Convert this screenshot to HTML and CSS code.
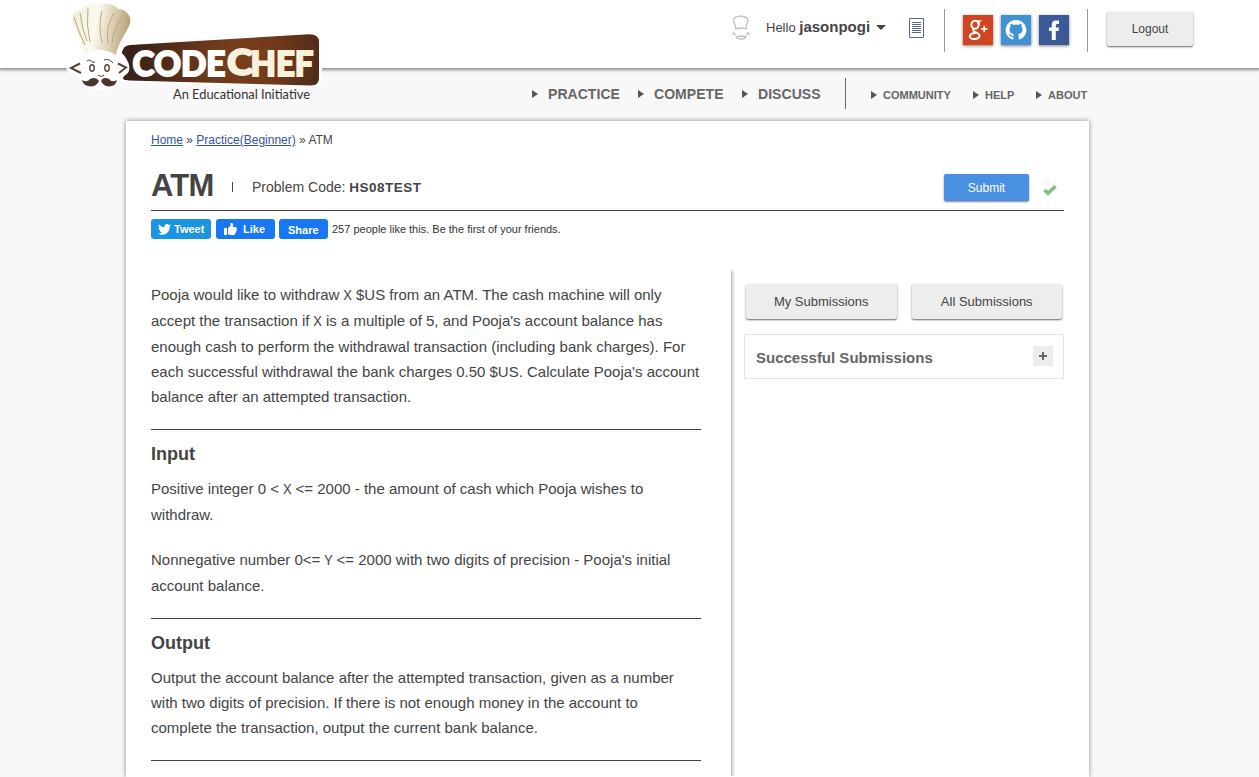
FILE: index.html
```html
<!DOCTYPE html>
<html lang="en">
<head>
<meta charset="utf-8">
<title>ATM | CodeChef</title>
<link rel="stylesheet" href="styles.css">
</head>
<body>
<header class="topbar">
  <a class="logo">
    <svg width="270" height="110" viewBox="60 0 270 110">
      <defs>
        <radialGradient id="wood" gradientUnits="userSpaceOnUse" cx="245" cy="58" r="105"><stop offset="0" stop-color="#7b401d"/><stop offset=".35" stop-color="#6f391b"/><stop offset="1" stop-color="#3c2318"/></radialGradient>
        <linearGradient id="hat" x1="0" x2="1" y1="0" y2=".15"><stop offset="0" stop-color="#f1ecd9"/><stop offset=".45" stop-color="#fbfaf0"/><stop offset=".7" stop-color="#e0d6b8"/><stop offset="1" stop-color="#b9a47c"/></linearGradient>
      </defs>
      <path d="M126 41L313 31Q322 31 322 40V78Q322 88 313 88L122 82L120 47Z" fill="#fff"/>
      <path d="M130 45L309 34.200Q319 34 319 42V78Q319 85.500 311 85.500L129 80.500Q122 80 122 76V52Q123 46 130 45Z" fill="url(#wood)"/>
      <path d="M82 51L118 50Q124 54 127 60Q133 71 124 76Q118 90 101 89Q84 90 78 77Q64 72 67 66Q70 59 78 59Z" fill="#fff"/>
      <path d="M84 55C83 43 78 34 73 24C71 15 74 11 82 9C87 4 94 3 101 5C108 2 115 5 118 9C127 9 132 17 130 24C125 35 118 43 116 55Q100 45 84 55Z" fill="url(#hat)"/>
      <g fill="none" stroke="#b8a680" stroke-width="1"><path d="M74 17Q79 33 85 45M80 13Q82 29 87 41M88 8Q86 25 90 42M102 11Q98 25 102 43M114 13Q105 28 108 43M122 17Q113 30 112 43"/></g>
      <g fill="none" stroke="#5a4138" stroke-width="2"><path d="M80 63.500L71 68L81 73M118 63.500L126 67.500L119 73"/></g>
      <g fill="none" stroke="#5a4138"><path d="M87 61Q89 59 91 61T95 62M104 60Q109 58 113 63M98 75Q101 78 104 75"/><ellipse cx="92" cy="68" rx="2.200" ry="3.200" stroke-width="1.400"/><ellipse cx="107" cy="68" rx="2.200" ry="3.200" stroke-width="1.400"/></g>
      <path d="M82 80Q87 83 90 79Q96 76 99 81Q96 88 88 86Q83 85 82 80ZM117 80Q112 83 109 79Q103 76 101 81Q104 88 112 86Q116 85 117 80Z" fill="#4b352e"/>
      <text x="132.500" y="75.500" class="logo-word" textLength="93" lengthAdjust="spacingAndGlyphs" fill="#fff" stroke="#fff">CODE</text>
      <text x="227" y="75" class="logo-word big" textLength="26" lengthAdjust="spacingAndGlyphs" fill="#f8f1db" stroke="#f8f1db">C</text>
      <text x="250.500" y="75.500" class="logo-word" textLength="63" lengthAdjust="spacingAndGlyphs" fill="#f8f1db" stroke="#f8f1db">HEF</text>
      <text x="173" y="99" class="logo-tag" textLength="137" lengthAdjust="spacingAndGlyphs" fill="#333">An Educational Initiative</text>
    </svg>
  </a>
  <svg class="mini-chef" width="18" height="26" viewBox="0 0 18 26" fill="none" stroke="#c0c0c0" stroke-width="1.300"><path d="M4 14C4 9 1 8 1.500 5C2 2 5 1.500 6 2Q9 0 12 2Q16 2 16 6Q14 10 14 14Q9 12 4 14ZM3 17L1 18.500L4 20M15 17L17 18.500L14 20M4 21Q5 24 9 24Q14 24 14 21M5 22Q9 20 13 22"/></svg>
  <div class="hello">Hello <b>jasonpogi</b></div>
  <i class="caret"></i>
  <svg class="doc" width="15" height="20" viewBox="0 0 15 20" fill="none" stroke="#53688b"><rect x=".5" y=".5" width="14" height="19" rx=".5"/><path d="M3 4.500H12M3 6.500H12M3 8.500H12M3 10.500H12M3 12.500H12M3 14.500H12"/></svg>
  <i class="rule"></i>
  <div class="social">
    <svg class="tile google" viewBox="0 0 30 30" fill="none" stroke="#fff"><path d="M18.500 5.900H12M15 6.300Q17 7.500 16.500 10" stroke-width="1.300"/><ellipse cx="12" cy="9.800" rx="3.600" ry="4" stroke-width="2"/><path d="M11 14Q9 15.500 12 17Q17 19 16.500 21Q16 24 11.500 24Q6.500 24 6.800 21Q7.500 18.300 12.500 18" stroke-width="1.900"/><path d="M18 14H24.500M21.250 10.800V17.300" stroke-width="1.600"/></svg>
    <svg class="tile github" viewBox="0 0 30 30"><path fill="#fff" d="M15 5A10 10 0 0 0 11.500 24.500C12.100 24.600 12.300 24.200 12.300 23.900V21.700C9.500 22.300 8.900 20.800 8.500 20C8.200 19.400 7.500 18.900 7.500 18.500C8.800 18.200 9.400 19.500 9.900 20.100C10.600 20.900 11.700 20.700 12.400 20.400Q12.600 19.500 13 19.100C10.500 18.800 8.500 17.700 8.500 14.300Q8.500 12.700 9.600 11.600Q9.200 10.200 9.700 8.800Q11.100 8.800 12.500 9.900Q15 9.200 17.500 9.900Q18.900 8.800 20.300 8.800Q20.900 10.200 20.400 11.600Q21.500 12.700 21.500 14.300C21.500 17.700 19.500 18.800 17 19.100Q17.700 19.700 17.700 21V23.900C17.700 24.200 17.900 24.600 18.500 24.500A10 10 0 0 0 15 5Z"/></svg>
    <svg class="tile facebook" viewBox="0 0 30 30"><path fill="#fff" d="M12.800 25V16H10V12.500H12.800V9.600Q12.800 5.500 16.800 5.500H20V9H18Q16.800 9 16.800 10.500V12.500H20L19.600 16H16.800V25Z"/></svg>
  </div>
  <i class="rule"></i>
  <button class="btn logout">Logout</button>
</header>

<nav class="nav">
  <a class="main practice">PRACTICE</a>
  <a class="main compete">COMPETE</a>
  <a class="main discuss">DISCUSS</a>
  <i class="nav-rule"></i>
  <a class="sub community">COMMUNITY</a>
  <a class="sub help">HELP</a>
  <a class="sub about">ABOUT</a>
</nav>

<main class="page">
  <div class="crumbs"><a href="#">Home</a> » <a href="#">Practice(Beginner)</a> » ATM</div>
  <div class="title">
    <h1>ATM</h1>
    <i class="tick"></i>
    <div class="code">Problem Code: <b>HS08TEST</b></div>
    <button class="submit">Submit</button>
    <svg class="check" width="14" height="12" viewBox="0 0 14 12"><path d="M1.500 6L5 9.300L12.500 2.200" fill="none" stroke="#83c27d" stroke-width="3.600"/></svg>
  </div>
  <div class="share">
    <a class="tweet"><svg width="13" height="11" viewBox="0 0 24 20"><path fill="#fff" d="M24 2.400L21.500 4.800Q21.500 13 15.500 17.300Q8 22 0 17.300Q4 17.600 7.300 15.100Q3.800 14.700 2.700 11.700H4.900Q1 10.500 1 6.800L3.200 7.400Q0 4.500 1.700.800Q6 5.700 11.800 6Q10.800.500 16.500 0Q18.500 0 20 1.500L23.200.300Q22.500 2 21.200 2.900Z"/></svg>Tweet</a>
    <a class="like"><svg width="13" height="12" viewBox="0 0 13 12"><path fill="#fff" d="M0 5H3V12H0ZM4 5L6.500 3V0H8Q10 1 8.800 4H12Q13.500 5 12.500 6.500Q13 8 12 8.800Q12 10 11.300 10.500Q11 12 9.500 12H6L4 11Z"/></svg>Like</a>
    <a class="fbshare">Share</a>
    <span class="likes">257 people like this. Be the first of your friends.</span>
  </div>
  <div class="columns">
    <article class="problem">
      <p>
        <span class="line tall">Pooja would like to withdraw <code>X</code> $US from an ATM. The cash machine will only</span>
        <span class="line tall">accept the transaction if <code>X</code> is a multiple of 5, and Pooja's account balance has</span>
        <span class="line">enough cash to perform the withdrawal transaction (including bank charges). For</span>
        <span class="line">each successful withdrawal the bank charges 0.50 $US. Calculate Pooja's account</span>
        <span class="line">balance after an attempted transaction.</span>
      </p>
      <h3>Input</h3>
      <p>
        <span class="line tall">Positive integer 0 &lt; <code>X</code> &lt;= 2000 - the amount of cash which Pooja wishes to</span>
        <span class="line">withdraw.</span>
      </p>
      <p class="second">
        <span class="line tall">Nonnegative number 0&lt;= <code>Y</code> &lt;= 2000 with two digits of precision - Pooja's initial</span>
        <span class="line">account balance.</span>
      </p>
      <h3>Output</h3>
      <p class="last">
        <span class="line">Output the account balance after the attempted transaction, given as a number</span>
        <span class="line">with two digits of precision. If there is not enough money in the account to</span>
        <span class="line">complete the transaction, output the current bank balance.</span>
      </p>
    </article>
    <aside class="side">
      <div class="side-buttons"><button class="btn">My Submissions</button><button class="btn">All Submissions</button></div>
      <div class="success"><span>Successful Submissions</span><i class="plus"></i></div>
    </aside>
  </div>
</main>
</body>
</html>
```
FILE: styles.css
```css
* { box-sizing: border-box; }
body { margin: 0; background: #f8f8f8; color: #444; font-family: "Liberation Sans", Arial, sans-serif; }
h1, h3, p { margin: 0; }
button { border: 0; padding: 0; font-family: inherit; color: #444; }

.topbar { position: relative; height: 68px; background: #fff; box-shadow: 0 1px 3px 1px #888; display: flex; align-items: flex-start; padding-left: 732px; }
.logo { position: absolute; left: 60px; top: 0; height: 110px; }
.logo-word { font: 900 34px Lato, sans-serif; stroke-width: 1.8px; }
.big { font-size: 36px; }
.logo-tag { font: 13.5px Lato, sans-serif; }
.mini-chef { margin-top: 15px; flex: none; }
.hello { margin: 18px 0 0 16px; width: 105px; font-size: 13px; line-height: 18px; white-space: nowrap; }
.hello b { font-size: 15px; }
.caret { margin: 25px 0 0 5px; border: 5px solid transparent; border-top-color: #444; border-bottom: 0; }
.doc { margin: 18px 0 0 23px; flex: none; }
.rule { width: 1px; height: 43px; margin: 9px 0 0 20px; background: #999; }
.social { display: flex; gap: 8px; margin: 15px 0 0 18px; }
.social + .rule { margin-left: 18px; }
.tile { width: 30px; height: 30px; box-shadow: 0 1px 3px rgba(0,0,0,.5); }
.google { background: #d0451f; }
.github { background: #4192d3; }
.facebook { background: #3b5998; }
.btn { background: #ededed; border-radius: 2px; box-shadow: 0 1px 2px rgba(0,0,0,.6); font-size: 13px; }
.logout { width: 86px; height: 34px; margin: 12px 0 0 19px; font-size: 12px; }

.nav { display: flex; height: 53px; padding: 10px 0 0 532px; align-items: flex-start; color: #666; font-weight: bold; white-space: nowrap; }
.nav a { display: flex; align-items: center; }
.nav a::before { content: ""; border: 4px solid transparent; border-left: 6px solid #555; border-right: 0; }
.main { font-size: 14px; height: 31px; letter-spacing: .05px; }
.main::before { margin-right: 10px; }
.sub { font-size: 11px; height: 34px; }
.sub::before { margin-right: 6px; }
.practice { width: 106px; }
.compete { width: 104px; }
.discuss { width: 103px; }
.nav-rule { width: 1px; height: 31px; background: #666; margin-right: 25px; }
.community { width: 102px; }
.help { width: 63px; }

.page { width: 963px; height: 656px; margin-left: 126px; padding: 11px 25px 0; background: #fff; box-shadow: 0 0 5px rgba(0,0,0,.45); }
.crumbs { font-size: 12px; line-height: 16px; }
.crumbs a { color: #35549b; }
.title { height: 63px; display: flex; align-items: flex-start; border-bottom: 1px solid #444; }
.title h1 { width: 63px; margin-top: 20px; font-size: 31px; line-height: 36px; letter-spacing: -.8px; }
.tick { width: 1px; height: 10px; margin: 34px 0 0 18px; background: #444; }
.code { margin: 30px auto 0 19px; font-size: 14px; line-height: 18px; }
.code b { font-size: 13.5px; letter-spacing: .5px; }
.submit { width: 85px; height: 27px; margin-top: 26px; background: #4990e2; color: #fff; font-size: 12px; border-radius: 2px; box-shadow: 0 1px 2px rgba(0,0,0,.5); }
.check { margin: 36px 7px 0 14px; }
.share { display: flex; height: 53px; padding-top: 8px; align-items: flex-start; font-size: 11px; white-space: nowrap; }
.share a { display: flex; align-items: center; height: 20px; border-radius: 3px; color: #fff; font-weight: bold; background: #1877f2; }
.share .tweet { width: 60px; padding-left: 7px; gap: 3px; margin-right: 5px; background: #1b95e0; }
.share .like { width: 59px; padding-left: 8px; gap: 6px; margin-right: 4px; }
.share .fbshare { width: 49px; padding: 2px 0 0 9px; margin-right: 4px; }
.likes { line-height: 20px; color: #333; }

.columns { display: flex; }
.problem { width: 580px; height: 512px; padding: 18px 30px 0 0; box-shadow: 4px 4px 4px -3px #999; clip-path: inset(0 -8px 0 0); font-size: 15px; }
.line { display: block; line-height: 25px; white-space: nowrap; }
.tall { line-height: 26px; }
.problem code { font: 14px "Noto Sans", sans-serif; line-height: 20px; }
.problem h3 { margin: 20px 0 9px; padding-top: 12px; border-top: 1px solid #444; font-size: 18px; line-height: 25px; }
.problem .second { margin-top: 20px; }
.problem .last { padding-bottom: 20px; border-bottom: 1px solid #444; }
.side { width: 320px; margin-left: 13px; padding-top: 20px; }
.side-buttons { display: flex; gap: 15px; padding: 0 2px 0 2px; }
.side-buttons .btn { flex: 1; height: 35px; }
.success { height: 45px; margin-top: 15px; padding: 0 10px 0 11px; display: flex; align-items: center; justify-content: space-between; border: 1px solid #e4e4e4; color: #666; font-size: 15px; font-weight: bold; }
.success span { padding-top: 2px; }
.plus { width: 20px; height: 20px; margin-bottom: 2px; background: linear-gradient(#666, #666) center / 8px 2px no-repeat, linear-gradient(#666, #666) center / 2px 8px no-repeat, #ededed; }
```
